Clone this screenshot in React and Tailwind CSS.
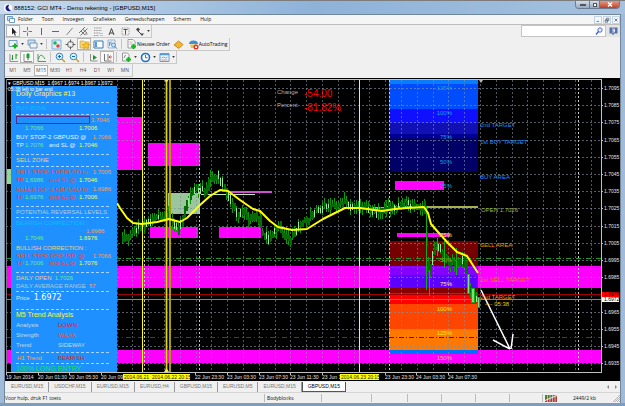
import { useState } from 'react';
import clsx from 'clsx';

const menuItems = ['Folder', 'Toon', 'Invoegen', 'Grafieken', 'Gereedschappen', 'Scherm', 'Hulp'];
const periods = ['M1', 'M5', 'M15', 'M30', 'H1', 'H4', 'D1', 'W1', 'MN'];
const chartTabs = ['EURUSD,M15', 'USDCHF,M15', 'EURUSD,M15', 'EURUSD,H4', 'GBPUSD,M15', 'EURUSD,M5', 'EURUSD,M15', 'GBPUSD,M15'];

/* ---------- Icons (11 x 11 grid) ---------- */

const Plus = ({ x, y }) => (
    <path d={`M${x} ${y - 2.5}v5M${x - 2.5} ${y}h5`} stroke="#12b51c" strokeWidth="2" />
);

const icons = {
    cursor: <path d="M4 1.5v7l1.700-1.500 1.200 2.700 1-.5-1.200-2.500h2z" fill="#222" />,
    cross: <path d="M5.500 1v3.500M5.500 6.500v3.500M1 5.500h3.500M6.500 5.500h3.500" stroke="#777" />,
    vline: <path d="M5.500 2v7" stroke="#666" />,
    hline: <path d="M2 5.500h7" stroke="#666" />,
    trend: <path d="M2.500 9l6-7" stroke="#666" strokeWidth=".8" />,
    channel: <path d="M1 7l6-6M2.500 9.500l7-7M3 5l4 4M5 3.500l4 3.500M7 8h2.500" stroke="#555" strokeWidth=".8" />,
    fibo: <path d="M2 2h8M2 4.500h8M2 7h6M2 9.500h5M8.500 7.500h2M8.500 9.500h2" stroke="#777" strokeWidth=".8" strokeDasharray="1 .6" />,
    textA: <path d="M3 9l2.500-6.500L8 9M4 7h3" stroke="#444" strokeWidth="1" fill="none" />,
    label: <><path d="M2 2h7v7H2z" stroke="#888" strokeWidth=".8" strokeDasharray="1 .7" fill="none" /><path d="M3.500 3.500h4M5.500 3.500v5" stroke="#555" /></>,
    shapes: <><path d="M2 3.500l2-2 2 2-2 2z" fill="#444" /><path d="M4 5l3 3" stroke="#444" /><path d="M6 7.500h4L8 10z" fill="#444" /></>,
    newChart: <><path d="M1 1.500h8v6H1z" fill="#e8f3fb" stroke="#5c87ac" strokeWidth=".8" /><Plus x={7} y={7} /></>,
    profiles: <><path d="M1 1h7v5H1z" fill="#cfe2f3" stroke="#5c87ac" strokeWidth=".8" /><path d="M3 4h7v5H3z" fill="#eef6fc" stroke="#5c87ac" strokeWidth=".8" /></>,
    market: <><path d="M1 1h9v9H1z" fill="#d9efff" stroke="#68a5c8" strokeWidth=".8" /><circle cx="4" cy="4" r="1.800" fill="#22b14c" /><circle cx="7" cy="7" r="1.800" fill="#e2452f" /></>,
    target: <><circle cx="5.500" cy="5.500" r="3" fill="none" stroke="#555" strokeWidth=".9" /><path d="M5.500 .5v3M5.500 7.500v3M.5 5.500h3M7.500 5.500h3" stroke="#555" strokeWidth=".9" /></>,
    navigator: <><path d="M1 2h4l1 1h4v6H1z" fill="#f5d67a" stroke="#c79a2b" strokeWidth=".6" /><path d="M7 3l1.200 2.300 2.500.3-1.800 1.700.5 2.500L7 8.600 4.700 9.800l.5-2.500-1.800-1.700 2.500-.3z" fill="#ffc928" stroke="#b9860b" strokeWidth=".5" /></>,
    terminal: <><path d="M1 2h9v7H1z" fill="#f8fcff" stroke="#3c78ad" /><path d="M2 3h2v5H2z" fill="#5b9bd5" /></>,
    tester: <><path d="M1 1h7v8H1z" fill="#e7f1fa" stroke="#7c9cba" strokeWidth=".7" /><path d="M2.500 3v4M4 2.500v3" stroke="#4c82b4" strokeWidth=".8" /><circle cx="6.500" cy="6" r="2" fill="#cde6fa" stroke="#4c82b4" strokeWidth=".8" /><path d="M8 7.500l2 2.300" stroke="#4c82b4" /></>,
    order: <><path d="M2 .5h5l2 2V9H2z" fill="#fafafa" stroke="#888" strokeWidth=".8" /><path d="M3.500 3h3M3.500 5h3" stroke="#999" strokeWidth=".7" /><Plus x={7.5} y={7.5} /></>,
    book: <path d="M1 6l4.500-4L10 5.500 6 9.500z" fill="#f2b632" stroke="#b77b14" strokeWidth=".8" />,
    auto: <><path d="M1 5a4.500 3.500 0 0 1 9 0z" fill="#3f8fd6" /><path d="M2 5.500h7L7 9H3z" fill="#f0c14a" /><circle cx="8" cy="8" r="2.500" fill="#e23222" /><path d="M7 7.200h2v1.700H7z" fill="#fff" /></>,
    bars: <><path d="M2 2v7.500h8" stroke="#777" strokeWidth=".8" fill="none" /><path d="M4.500 3v5M8 2v5M3.500 7h1M8 3h1.500" stroke="#1c9430" /></>,
    candles: <><path d="M2 2v7.500h8" stroke="#777" strokeWidth=".8" fill="none" /><path d="M6 1v7" stroke="#168a28" /><path d="M4.500 2h3v4h-3z" fill="#16a52a" /></>,
    line: <path d="M2 2v7.500h8M2.500 7C4 2 6 2 9 7" stroke="#3a8d4a" strokeWidth=".9" fill="none" />,
    zoomIn: <><circle cx="4.500" cy="4.500" r="3.300" fill="#d9efff" stroke="#318bd0" /><path d="M3 4.500h3M4.500 3v3" stroke="#1667a8" /><path d="M7 7l3 3" stroke="#c79a2b" strokeWidth="1.500" /></>,
    zoomOut: <><circle cx="4.500" cy="4.500" r="3.300" fill="#d9efff" stroke="#318bd0" /><path d="M3 4.500h3" stroke="#1667a8" /><path d="M7 7l3 3" stroke="#c79a2b" strokeWidth="1.500" /></>,
    scroll: <><path d="M2.500 2v7h7" stroke="#777" strokeWidth=".8" fill="none" /><path d="M5 3l4 2.500L5 8z" fill="#1c9430" /></>,
    shift: <><path d="M2.500 2v7h7M6 2v6" stroke="#666" strokeWidth=".9" fill="none" /><path d="M10 5H7M8.500 3.500L7 5l1.500 1.500" stroke="#d13b26" strokeWidth=".9" fill="none" /></>,
    indicators: <><path d="M1.500 1h5l1.500 1.500V9H1.500z" fill="#f4f8fa" stroke="#888" strokeWidth=".8" /><path d="M3 6l1.500-3" stroke="#666" strokeWidth=".8" /><Plus x={7.5} y={7.5} /></>,
    clock: <><circle cx="5.500" cy="5.500" r="4" fill="#fff" stroke="#1d6fcb" strokeWidth="1.600" /><path d="M5.500 3v2.800h2" stroke="#444" strokeWidth=".8" fill="none" /></>,
    template: <><path d="M1 1.500h9v8H1z" fill="#eef7ff" stroke="#4d88b8" strokeWidth=".8" /><path d="M1 2.500h9" stroke="#4d9be0" strokeWidth="1.500" /><path d="M2.500 6l2-1 2 1 2-1M2.500 8h6" stroke="#c8643c" strokeWidth=".7" fill="none" /></>,
};

const Tool = ({ name, label, active, wide }) => (
    <button
        aria-label={label || name}
        className={clsx(
            'flex h-3 items-center justify-center text-[5px] text-black',
            wide ? 'px-[2px]' : 'w-[14px]',
            active && 'border border-[#b4b4b4] bg-[#f9f9f9]'
        )}
    >
        <svg viewBox="0 0 11 11" fill="none" className="size-[11px] shrink-0">{icons[name]}</svg>
        {wide && <span className="whitespace-nowrap">{label}</span>}
    </button>
);

const Caret = () => (
    <button aria-label="More" className="flex h-3 w-[5px] items-center justify-center">
        <svg viewBox="0 0 4 3" className="h-[2px] w-[3px]"><path d="M0 0h4L2 3z" fill="#333" /></svg>
    </button>
);

const Sep = () => <span className="mx-[2px] h-[10px] w-px bg-[#c4c4c4]" />;

const ToolRow = ({ children }) => (
    <div className="flex h-[13px] w-fit items-center border-r border-b border-[#c9c9c9] pl-px">{children}</div>
);

/* ---------- Chart ---------- */

const verticals = Array.from({ length: 38 }, (_, i) => 6 + i * 15.8);
const prices = Array.from({ length: 17 }, (_, i) => ({
    y: 88 + Math.round(i * 17.2),
    text: (1.7095 - i * 0.001).toFixed(4),
}));

// the labels next to a highlighted time are cut short by it
const times = [
    [6, '19 Jun 2014'], [38, '20 Jun 01:30'], [69, '20 Jun 05:30'], [101, '20 Jun 09:'],
    [195, '22 Jun 23:30'], [227, '23 Jun 03:30'], [259, '23 Jun 07:30'], [290, '23 Jun 11:30'],
    [322, '23 Jun 1'], [385, '23 Jun 23:30'], [416, '24 Jun 03:30'], [448, '24 Jun 07:30'],
];

const zones = [
    [79, 5, '#0a7dff'], [84, 25, '#004dff'], [109, 14, '#1010ff'], [123, 11, '#1010b4'],
    [134, 4, '#000096'], [138, 34, '#000066'], [241, 25, '#760000'], [266, 9, '#8400ff'],
    [275, 13, '#5c00ff'], [288, 5, '#8a0000'], [293, 11, '#ff0000'], [304, 25, '#ff4600'],
    [329, 21, '#ff7800'], [350, 4, '#0070ff'],
];

const blocks = [
    [117, 117, 25, 53], [148, 143, 52, 23], [150, 227, 48, 11], [219, 227, 42, 11], [395, 181, 49, 9], [397, 233, 53, 4],
];

const levels = [
    [88, '125%', '#12a0e8'], [113, '100%', '#12a0e8'], [137, '75%', '#12a0e8'], [162, '50%', '#12a0e8'], [186, '25%', '#12a0e8'],
    [235, '25%', '#e8e000'], [260, '50%', '#8fb000'], [284, '75%', '#ffe680'], [309, '100%', '#ffe600'], [333, '125%', '#ffe600'], [358, '150%', '#ffb080'],
];

const areas = [
    [480, 125, '2nd TARGET', '#1e90ff'], [480, 142, '1st BUY TARGET', '#1e90ff'], [480, 177, 'BUY AREA', '#1e90ff'],
    [480, 245, 'SELL AREA', '#ff8c00'], [480, 280, '1st SELL TARGET', '#ff6a3c'], [480, 297, '2nd TARGET', '#ff8c00'],
];

const trendPoints = [
    [122, 240], [132, 233], [142, 226], [155, 217], [167, 215], [172, 222], [178, 230], [182, 220], [186, 206], [190, 196],
    [197, 188], [205, 192], [210, 178], [218, 176], [224, 188], [230, 200], [238, 215], [243, 208], [248, 220], [254, 214],
    [260, 222], [262, 235], [268, 238], [275, 230], [280, 226], [283, 236], [291, 238], [298, 226], [307, 220], [316, 212],
    [325, 206], [338, 205], [345, 202], [352, 207], [365, 208], [375, 214], [385, 208], [400, 206], [405, 203], [415, 207],
    [425, 208], [426, 240], [429, 280], [431, 262], [435, 246], [440, 250], [448, 262], [456, 265], [463, 257], [467, 272],
    [469, 290], [473, 296], [478, 300],
];

const priceAt = (x) => {
    const i = Math.max(1, trendPoints.findIndex((p) => p[0] >= x));
    const [x0, y0] = trendPoints[i - 1];
    const [x1, y1] = trendPoints[i];
    return y0 + ((y1 - y0) * (x - x0)) / (x1 - x0);
};

const noise = (n) => {
    const v = Math.sin(n * 127.1) * 43758.5453;
    return v - Math.floor(v);
};

const candles = Array.from({ length: 178 }, (_, i) => {
    const x = 122 + i * 2;
    const y = priceAt(x) + (noise(i) - 0.5) * 4;
    const slope = Math.abs(priceAt(Math.min(x + 2, 477)) - priceAt(x));
    return {
        x,
        top: y - 2 - noise(i + 300) * 7,
        bottom: y + 2 + noise(i + 600) * 7,
        bodyTop: y - 1 - Math.min(slope, 8) / 2 - noise(i + 900) * 2,
        body: 3 + Math.min(slope, 8) + noise(i + 1200) * 3,
        light: noise(i + 1500) > 0.7,
    };
});

const Chart = () => (
    <svg viewBox="5 78 615 303" className="block h-auto w-full bg-black font-['Liberation_Sans',sans-serif]">
        <g shapeRendering="crispEdges">
            {zones.map(([y, h, fill]) => <rect key={y} x="389" y={y} width="89" height={h} fill={fill} />)}
            <rect x="6" y="266" width="383" height="22" fill="#f0f" />
            <rect x="478" y="266" width="123" height="22" fill="#f0f" />
            <rect x="6" y="350" width="383" height="13" fill="#f0f" />
            <rect x="478" y="350" width="123" height="13" fill="#f0f" />
            <rect x="389" y="354" width="89" height="9" fill="#f0f" />
            {blocks.map(([x, y, w, h]) => <rect key={`${x}-${y}`} x={x} y={y} width={w} height={h} fill="#f0f" />)}
            <rect x="168" y="193" width="32" height="21" fill="#9bc59b" />
            <rect x="6" y="169" width="5" height="15" fill="#8fdc8f" />
            <rect x="372" y="207" width="14" height="4" fill="#a8a8a8" />

            {/* Grid */}
            {verticals.map((x) => <path key={x} d={`M${Math.round(x) + 0.5} 80V372`} stroke="#7e8f9f" strokeOpacity=".6" strokeDasharray="2 2" />)}
            {prices.map(({ y }) => <path key={y} d={`M6 ${y + 0.5}H601`} stroke="#7e8f9f" strokeOpacity=".65" strokeDasharray="2 2" />)}
            {[144, 199, 389, 578].map((x) => <path key={x} d={`M${x + 0.5} 80V372`} stroke="#c8c8c8" strokeDasharray="2 2" />)}

            <path d="M6 258.500H601" stroke="#1f9a1f" strokeDasharray="5 2 1 2" />
            <path d="M6 267.500H601" stroke="#8c2f8c" strokeDasharray="4 1" />
            <path d="M6 337.500H389M478 337.500H601" stroke="#b01010" strokeDasharray="5 3 1 3" />
            <path d="M389 337.500H478" stroke="#5c2000" strokeDasharray="5 2 1 2" />
            <path d="M6 294.500H601" stroke="#a00000" />
            <path d="M6 299.500H601" stroke="#7c848c" />
            <path d="M230 191.500H272" stroke="#d050d0" strokeWidth="2" />
            <path d="M201 194.500H255" stroke="#b8e8b8" />
            <path d="M386 206.500H478" stroke="#a8b050" strokeWidth="2" />
        </g>

        {candles.map((c) => (
            <g key={c.x} shapeRendering="crispEdges">
                <rect x={c.x} y={c.top} width="1" height={c.bottom - c.top} fill="#0b960b" />
                <rect x={c.x} y={c.bodyTop} width={c.light ? 1 : 2} height={c.body} fill={c.light ? '#98ea98' : '#076c07'} />
            </g>
        ))}
        <g fill="#7be07b" stroke="#0fae0f" shapeRendering="crispEdges">
            <path d="M426.500 206V290M429.500 270V296M437.500 238V256M444.500 241V268M456.500 248V275" />
            <rect x="467" y="274" width="2" height="19" />
            <rect x="471" y="288" width="3" height="14" />
            <rect x="477" y="297" width="2" height="10" />
        </g>

        {/* Session markers and moving average */}
        <path d="M142.500 80V372M359.500 80V372" stroke="#ff0" />
        <path d="M166.500 80V372" stroke="#a59d00" strokeWidth="2" />
        <path d="M170 80V372" stroke="#a59d00" strokeWidth="2" />
        <path d="M166.500 80V372" stroke="#f0e800" strokeWidth=".8" />
        <path d="M164 79h5l-2.500 4zM164 372h5l-2.500-4z" fill="#ffe83c" />
        <path d="M479 80h4l-2 3z" fill="#b8b8b8" />
        <path
            d="M117 203L120 208L127 218L133 223L142 224L157 222L169 219L180 222L187 218L200 205L210 196L220 190L228 191L240 200L253 209L260 211L270 221L278 227L292 230L307 229L323 219L345 208L360 208L382 211L395 209L407 208L424 207L428 213L431 224L438 232L448 243L457 252L467 256L478 273"
            fill="none"
            stroke="#ff0"
            strokeWidth="2"
            strokeLinejoin="round"
        />
        <path d="M481 290L510 349M493 340L510 349M513 334L511 349" stroke="#fff" strokeWidth="1.500" fill="none" />

        <g fontSize="6">
            {levels.map(([y, text, fill]) => <text key={y} x="452" y={y + 2} textAnchor="end" fill={fill}>{text}</text>)}
            {areas.map(([x, y, text, fill]) => <text key={y} x={x} y={y + 2} fill={fill}>{text}</text>)}
            <text x="481" y="212" fill="#a8b838">OPEN 1.7026</text>
            <text x="485" y="306" fill="#e8c800">&lt;-- 05:38</text>
            <text x="277" y="94" fill="#b0b0b0">Change</text>
            <text x="277" y="107" fill="#b0b0b0">Percent</text>
        </g>
        <g fontSize="10" fill="#f00">
            <text x="304" y="97">-54.00</text>
            <text x="304" y="111">-81.82%</text>
        </g>

        {/* Axes */}
        <path d="M6 79.500H601.500V372.500H6" fill="none" stroke="#c0c0c0" shapeRendering="crispEdges" />
        <path d="M6.500 79V372" stroke="#777" />
        <g fontSize="5" fill="#e4e4e4" className="font-['Liberation_Sans_Narrow','Liberation_Sans',sans-serif]">
            {prices.map(({ y, text }) => (
                <g key={y}>
                    <path d={`M601 ${y + 0.5}h2`} stroke="#c0c0c0" />
                    {text !== '1.6975' && <text x="604" y={y + 2}>{text}</text>}
                </g>
            ))}
            {times.map(([x, text]) => (
                <g key={x}>
                    <path d={`M${x + 0.5} 372v3`} stroke="#c0c0c0" />
                    <text x={x} y="379">{text}</text>
                </g>
            ))}
            <rect x="602" y="292" width="17" height="5" fill="#f00" />
            <text x="604" y="296" fill="#400">1.6976</text>
            <rect x="602" y="297" width="17" height="5" fill="#fff" />
            <text x="604" y="301" fill="#000">1.6972</text>
            <rect x="123" y="374" width="67" height="6" fill="#ff0" />
            <rect x="340" y="374" width="39" height="6" fill="#ff0" />
            <g fill="#222">
                <text x="124" y="379">2014.06.21</text>
                <text x="152" y="379">2014.06.22 20:15</text>
                <text x="341" y="379">2014.06.23 20:15</text>
            </g>
        </g>
    </svg>
);

/* ---------- Info panel ---------- */

const Dashes = ({ className }) => (
    <div className={clsx('flex h-[2px] w-[93px] items-center', className)}>
        <div className="w-full border-t border-dashed border-[#a9d4fa]" />
    </div>
);

const Line = ({ className, children, value }) => (
    <div className={clsx('flex w-[95px] items-center justify-between whitespace-pre', className)}>
        <span>{children}</span>
        {value && <span className="text-[#ff9c50]">{value}</span>}
    </div>
);

const Targets = ({ className, tp, sl, words = true }) => (
    <div className={clsx('grid grid-cols-[9px_24px_30px_auto] items-center whitespace-nowrap', className)}>
        <span>{words && 'TP'}</span>
        <span className="text-[#6fe88a]">{tp}</span>
        <span>{words && 'and SL @'}</span>
        <span className="text-[#f0ff50]">{sl}</span>
    </div>
);

const Status = ({ label, value, color }) => (
    <div className="grid h-[10px] grid-cols-[42px_auto] items-center text-[#d0d8e0]">
        <span>{label}</span>
        <span className={color}>{value}</span>
    </div>
);

const InfoPanel = () => (
    <div className="absolute top-2 bottom-[9px] left-[6px] w-[106px] overflow-hidden bg-[#1e90ff] pl-[5px] font-['Liberation_Sans',sans-serif] text-[6px] leading-[6px]">
        <div className="flex h-[15px] items-center text-[7px] text-[#fff040]">Dolly Graphics #13</div>
        <Dashes />
        <Line className="h-[10px] text-[#00c0ff]">BUY ZONE</Line>
        <Dashes />
        <div className="flex h-[9px] items-center gap-px">
            <div className="h-2 w-[74px] border border-[#5a2a80]" />
            <span className="text-[#ff9c50]">1.7046</span>
        </div>
        <Targets className="h-2" tp="1.7066" sl="1.7006" words={false} />
        <Line className="h-[10px] text-[#e4f2ff]" value="1.7066">BUY STOP-2 GBPUSD @</Line>
        <Targets className="h-[6px] text-[#e4f2ff]" tp="1.7076" sl="1.7046" />
        <Dashes className="mt-[5px]" />
        <Line className="h-[10px] text-[#f4c888]">SELL ZONE</Line>
        <Dashes />
        <Line className="h-[9px] text-[#ff4030]" value="1.7005">SELL STOP-1 GBPUSD to</Line>
        <Targets className="h-[7px] text-[#ff4030]" tp="1.6986" sl="1.7046" />
        <Line className="mt-[2px] h-2 text-[#ff4030]" value="1.6986">SELL STOP-2 GBPUSD to</Line>
        <Targets className="h-[7px] text-[#ff4030]" tp="1.6976" sl="1.7006" />
        <Dashes className="mt-[5px]" />
        <Line className="h-[9px] text-[#b4ccdc]">POTENTIAL REVERSAL LEVELS</Line>
        <Dashes />
        <Line className="h-[9px] text-[#00c0ff]">BEARISH CORRECTION :</Line>
        <div className="flex h-[7px] items-center pl-[70px] text-[#ff9c50]">1.6986</div>
        <Targets className="h-2" tp="1.7046" sl="1.6976" words={false} />
        <Line className="mt-[2px] h-2 text-[#f4c888]">BULLISH CORRECTION :</Line>
        <Line className="h-[7px] text-[#ff4030]" value="1.7066">SELL STOP GBPUSD  @</Line>
        <Targets className="h-[7px] text-[#ff4030]" tp="1.7006" sl="1.7076" />
        <Dashes className="mt-[5px]" />
        <Line className="h-[9px] text-[#f4c888]">DAILY OPEN  <span className="text-[#6fe88a]">1.7026</span></Line>
        <Line className="h-[7px] text-[#b4ccdc]">DAILY AVERAGE RANGE  <span className="text-[#ff9c50]">57</span></Line>
        <Dashes className="mt-px" />
        <div className="flex h-3 items-center gap-1 text-[#dce4ec]">
            <span>Price</span>
            <span className="font-['DejaVu_Sans',sans-serif] text-[8px] text-white">1.6972</span>
        </div>
        <Dashes className="mt-1" />
        <div className="flex h-[10px] items-center text-[7px] text-[#fff040]">M5 Trend Analysis</div>
        <Status label="Analysis" value="DOWN" color="text-[#f01028]" />
        <Status label="Strength" value="WEAK" color="text-[#ff4c34]" />
        <Status label="Trend" value="SIDEWAY" color="text-[#d0d8e0]" />
        <Dashes className="mt-px" />
        <div className="grid h-[9px] grid-cols-[41px_auto] items-center pl-px">
            <span className="text-[#ffa040]">H1 Trend</span>
            <span className="text-[#f01028]">BEARISH</span>
        </div>
        <Dashes />
        <div className="mt-px flex h-2 items-center text-[7px] text-[#10e060]">100% LONG ENTRY</div>
    </div>
);

const App = () => {
    const [period, setPeriod] = useState('M15');
    const [activeTab, setActiveTab] = useState(7);

    return (
        <div className="flex flex-col border-t border-[#7c7c7c] bg-[#9fbbd8] font-['Open_Sans','Noto_Sans',sans-serif] leading-none">
            {/* Title bar */}
            <header className="flex h-[13px] items-start justify-between bg-linear-to-r from-[#c9dcee] via-[#8fb2d9] to-[#a5c1de] pr-[5px] pl-1">
                <div className="flex h-[13px] items-center gap-[2px]">
                    <svg viewBox="0 0 8 8" className="size-2">
                        <circle cx="4" cy="4" r="4" fill="#fff" />
                        <path d="M5.500.8A3.300 3.300 0 1 0 7 6.500 3.300 3.300 0 0 1 5.500.8z" fill="#1c1c8c" />
                    </svg>
                    <h1 className="font-['Liberation_Sans',sans-serif] text-[6px] text-black">888152: GCI MT4 - Demo rekening - [GBPUSD,M15]</h1>
                </div>
                <div className="flex h-2 overflow-hidden rounded-b-sm border border-t-0 border-[#6b7c90]">
                    <button aria-label="Minimize" className="flex w-[14px] items-center justify-center border-r border-[#6b7c90] bg-linear-to-b from-[#d3dde9] to-[#94a9c2]">
                        <span className="h-[2px] w-[6px] border border-[#555] bg-white" />
                    </button>
                    <button aria-label="Restore" className="flex w-[10px] items-center justify-center border-r border-[#6b7c90] bg-linear-to-b from-[#d3dde9] to-[#94a9c2]">
                        <span className="size-1 border border-[#555] bg-white" />
                    </button>
                    <button aria-label="Close" className="flex w-[19px] items-center justify-center bg-linear-to-b from-[#e29a86] to-[#c03a20]">
                        <svg viewBox="0 0 6 5" className="h-[5px] w-[6px]"><path d="M1 .5l4 4M5 .5l-4 4" stroke="#fff" strokeWidth="1.500" /></svg>
                    </button>
                </div>
            </header>

            <div className="mx-[4px] flex flex-col border-x border-t border-[#71869c] bg-[#f0f0f0]">
                {/* Menu */}
                <nav className="flex h-[10px] items-center justify-between border-b border-[#bdbdbd] bg-[#f5f5f5] text-[5px] text-[#111]">
                    <div className="flex items-center gap-[9px] pl-[2px]">
                        <svg viewBox="0 0 8 7" className="-mr-[6px] h-[7px] w-2">
                            <path d="M.5.500h5v4h-5z" fill="#cfe4f7" stroke="#4a88c0" strokeWidth=".8" />
                            <path d="M2.500 2.500h5v4h-5z" fill="#fff" stroke="#4a88c0" strokeWidth=".8" />
                        </svg>
                        {menuItems.map((item) => <button key={item}>{item}</button>)}
                    </div>
                    <div className="flex gap-px">
                        {[['Minimize chart', 'M2 5.500h3'], ['Restore chart', 'M3 1.500h3v3H3zM1.500 3.500h3v3h-3z'], ['Close chart', 'M2 2l3.500 3.500M5.500 2L2 5.500']].map(([label, d]) => (
                            <button key={label} aria-label={label} className="size-2 border border-[#c3d3e4] bg-[#f3f8fd]">
                                <svg viewBox="0 0 7.500 7.500" className="size-full"><path d={d} stroke="#52606e" strokeWidth="1" fill="none" /></svg>
                            </button>
                        ))}
                    </div>
                </nav>

                {/* Toolbars */}
                <div className="flex h-[53px] items-start justify-between overflow-hidden">
                    <div className="flex flex-col">
                        <ToolRow>
                            <Tool name="cursor" active />
                            <Tool name="cross" />
                            <Tool name="vline" />
                            <Tool name="hline" />
                            <Tool name="trend" />
                            <Tool name="channel" />
                            <Tool name="fibo" />
                            <Tool name="textA" />
                            <Tool name="label" />
                            <Tool name="shapes" />
                            <Caret />
                        </ToolRow>
                        <ToolRow>
                            <Tool name="newChart" />
                            <Caret />
                            <Tool name="profiles" />
                            <Caret />
                            <Sep />
                            <Tool name="market" />
                            <Tool name="target" />
                            <Tool name="navigator" active />
                            <Tool name="terminal" />
                            <Tool name="tester" />
                            <Sep />
                            <Tool name="order" label="Nieuwe Order" wide />
                            <Tool name="book" />
                            <Tool name="auto" label="AutoTrading" wide />
                        </ToolRow>
                        <ToolRow>
                            <Tool name="bars" />
                            <Tool name="candles" active />
                            <Tool name="line" />
                            <Sep />
                            <Tool name="zoomIn" />
                            <Tool name="zoomOut" />
                            <Sep />
                            <Tool name="scroll" />
                            <Tool name="shift" active />
                            <Sep />
                            <Tool name="indicators" />
                            <Caret />
                            <Tool name="clock" />
                            <Caret />
                            <Tool name="template" />
                            <Caret />
                        </ToolRow>
                        <ToolRow>
                            {periods.map((p) => (
                                <button
                                    key={p}
                                    onClick={() => setPeriod(p)}
                                    className={clsx('flex h-[11px] w-[14px] items-center justify-center text-[5px] text-[#555]', p === period && 'border border-[#b4b4b4] bg-[#f9f9f9]')}
                                >
                                    {p}
                                </button>
                            ))}
                        </ToolRow>
                    </div>
                    <div className="flex h-3">
                        <label className="flex w-[85px] items-center border border-[#c4c4c4] bg-white pr-[2px]">
                            <input aria-label="Search" className="min-w-0 flex-1 text-[6px] outline-none" />
                            <svg viewBox="0 0 8 8" className="size-2"><circle cx="5" cy="3" r="2.200" fill="#e8f0ff" stroke="#3a5fc8" strokeWidth=".9" /><path d="M3.500 4.500L1 7.500" stroke="#3a5fc8" strokeWidth="1.300" /></svg>
                        </label>
                        <button aria-label="Messages" className="flex w-[14px] items-center justify-center bg-[#e4e4e4]">
                            <svg viewBox="0 0 9 9" className="size-[9px]"><path d="M.5.500h8v6H5L4 8.500l-1-2H.5z" fill="#5470a8" /><path d="M3 2h2.500v3H3M3.500 3.500h2" stroke="#fff" strokeWidth=".8" fill="none" /></svg>
                        </button>
                    </div>
                </div>

                {/* Chart window */}
                <main className="relative">
                    <Chart />
                    <InfoPanel />
                    <div className="absolute top-[2px] left-[3px] flex flex-col font-['Liberation_Sans',sans-serif] text-[5px] leading-[6px] whitespace-pre text-white">
                        <span>▾ GBPUSD,M15  1.6967 1.6974 1.6967 1.6972</span>
                        <span>05:38 left to bar end</span>
                    </div>
                </main>

                {/* Chart tabs */}
                <div className="flex h-[12px] items-center justify-between border-b border-[#d4d4d4] font-['Liberation_Sans',sans-serif] text-[5px] text-[#777]">
                    <div className="flex items-start pl-px">
                        {chartTabs.map((tab, i) => (
                            <button
                                key={i}
                                onClick={() => setActiveTab(i)}
                                className={clsx('h-[10px] px-[5px]', i === activeTab ? 'border border-t-0 border-[#555] bg-white text-black' : 'border-r border-[#999]')}
                            >
                                {tab}
                            </button>
                        ))}
                    </div>
                    <svg viewBox="0 0 12 4" className="mr-[2px] h-1 w-3"><path d="M3 0v4L1 2zM9 0v4l2-2z" fill="#888" /></svg>
                </div>

                {/* Status bar */}
                <footer className="flex h-[10px] items-center text-[5px] text-[#111]">
                    <span className="flex-1">Voor hulp, druk F1 toets</span>
                    <span className="w-[57px] border-l border-[#bbb] pl-[2px] leading-[8px]">Bodyblocks</span>
                    <span className="h-2 w-[50px] border-l border-[#bbb]" />
                    <span className="h-2 w-[36px] border-l border-[#bbb]" />
                    <span className="h-2 w-[34px] border-l border-[#bbb]" />
                    <span className="h-2 w-[34px] border-l border-[#bbb]" />
                    <span className="h-2 w-[34px] border-l border-[#bbb]" />
                    <span className="h-2 w-[33px] border-l border-[#bbb]" />
                    <div className="flex h-2 w-[78px] items-center justify-between border-l border-[#bbb] pl-[2px]">
                        <svg viewBox="0 0 12 7" className="h-[7px] w-3">
                            <path d="M0 0h12L0 5z" fill="#4f7a30" />
                            <path d="M0 7h12V1L0 6z" fill="#b03c34" />
                            <path d="M2.500 0v7M5 0v7M7.500 0v7M10 0v7" stroke="#f0f0f0" strokeWidth=".6" />
                        </svg>
                        <span>2449/2 kb</span>
                        <svg viewBox="0 0 8 8" className="size-2"><path d="M1 8l7-7M3 8l5-5M5 8l3-3M7 8l1-1" stroke="#999" strokeWidth=".7" /></svg>
                    </div>
                </footer>
            </div>
            <div className="h-[4px] border-b border-[#2d5a70] bg-[#7f9dba]" />
        </div>
    );
};

export default App;
